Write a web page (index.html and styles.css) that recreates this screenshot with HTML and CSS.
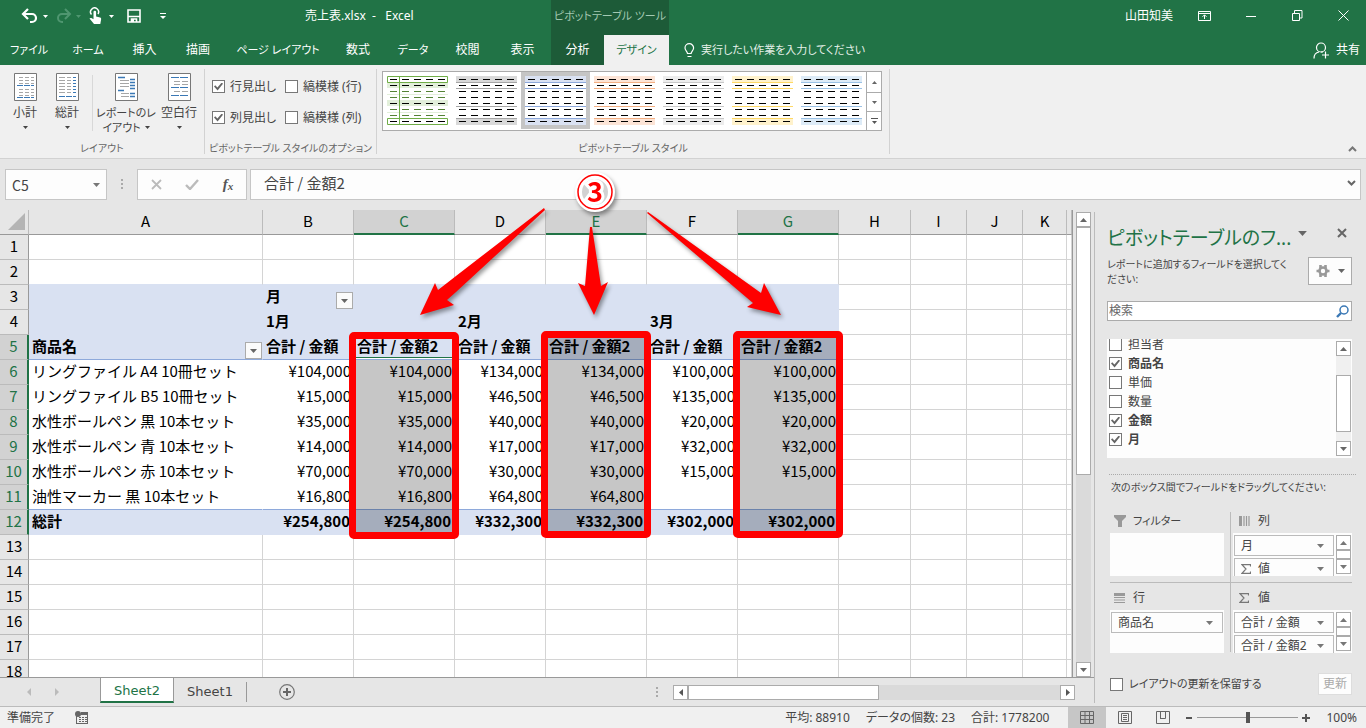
FILE: index.html
```html
<!DOCTYPE html>
<html lang="ja">
<head>
<meta charset="utf-8">
<title>売上表.xlsx - Excel</title>
<link rel="stylesheet" href="styles.css">
</head>
<body>
<svg class="defs" aria-hidden="true">
  <symbol id="down" viewBox="0 0 7 4"><path d="M0 0h7L3.500 4z" fill="currentColor"/></symbol>
  <symbol id="up" viewBox="0 0 7 4"><path d="M0 4h7L3.500 0z" fill="currentColor"/></symbol>
  <symbol id="sigma" viewBox="0 0 10 10"><path d="M9.500 2.500V.7H1L5 5 1 9.300h8.500V7.500" fill="none" stroke="currentColor" stroke-width="1.200"/></symbol>
  <symbol id="dashes" viewBox="0 0 61 49"><path d="M3 3.500h58M3 9.500h58M3 15.500h58M3 21.500h58M3 27.500h58M3 33.500h58M3 39.500h58M3 45.500h58" stroke="#000" stroke-dasharray="7 5"/></symbol>
  <symbol id="banded" viewBox="0 0 61 49"><path d="M0 0h61v6H0zM0 43h61v6H0z" fill="var(--band)"/><path d="M0 6.500h61M0 12.500h61M0 30.500h61M0 42.500h61" stroke="var(--rule)"/><use href="#dashes" width="61" height="49"/></symbol>
</svg>

<header class="app-head">
  <div class="title-row">
    <div class="title-left">
      <div class="qat">
        <span class="qat-pair"><button aria-label="元に戻す"><svg width="18" height="16"><path d="M2 6h9a4 4 0 0 1 0 8H9M7 1L2 6l5 5" fill="none" stroke="#fff" stroke-width="2.200"/></svg></button><button class="arr" aria-label="履歴"><svg width="5" height="3"><use href="#down" width="5" height="3"/></svg></button></span>
        <span class="qat-pair dim"><button aria-label="やり直し"><svg width="18" height="16"><path d="M16 6H8a4 4 0 0 0 0 8h1M11 1l5 5-5 5" fill="none" stroke="currentColor" stroke-width="2"/></svg></button><button class="arr" aria-label="やり直し履歴"><svg width="5" height="3"><use href="#down" width="5" height="3"/></svg></button></span>
        <span class="qat-pair"><button aria-label="タッチ/マウス"><svg width="18" height="18"><path d="M4.500 7.500A4 4 0 1 1 11 7" fill="none" stroke="#fff" stroke-width="1.500"/><path d="M6.500 5a1.300 1.300 0 0 1 2.600 0v4.500l4 1c1 .2 1.200 1 1 2L13.300 17H7L2.500 11.500c.8-1 2-.7 4 .8z" fill="#fff"/></svg></button><button class="arr" aria-label="モード"><svg width="5" height="3"><use href="#down" width="5" height="3"/></svg></button></span>
        <button class="save" aria-label="保存"><svg width="14" height="14"><path d="M1 1h12v12H1zM1 7.500h12M4.500 13v-3h5v3" fill="none" stroke="#fff" stroke-width="1.600"/><path d="M5 10h2v3H5z" fill="#fff"/></svg></button>
        <button class="custom" aria-label="カスタマイズ"><svg width="6" height="7"><path d="M0 .5h6" stroke="#fff"/><path d="M0 3h6L3 6z" fill="#fff"/></svg></button>
      </div>
      <h1 class="doc-title">売上表.xlsx&nbsp; -&nbsp;&nbsp; Excel</h1>
    </div>
    <div class="context-title">ピボットテーブル ツール</div>
    <div class="window-tools">
      <span class="user">山田知美</span>
      <button aria-label="リボンの表示"><svg width="14" height="12"><path d="M.5 1.500h12v9H.5zM.5 3.500h12M6.500 9V5M4.500 6.800l2-2 2 2" fill="none" stroke="#fff"/></svg></button>
      <button aria-label="最小化"><svg width="10" height="10"><path d="M0 5.500h10" stroke="#fff"/></svg></button>
      <button aria-label="元のサイズ"><svg width="11" height="11"><path d="M.5 3.500h7v7h-7zM2.500 3V.5h7.500V8H8" fill="none" stroke="#fff"/></svg></button>
      <button aria-label="閉じる"><svg width="11" height="11"><path d="M.5.5l10 10M10.500.5l-10 10" stroke="#fff"/></svg></button>
    </div>
  </div>
  <div class="tab-row">
    <nav class="tabs">
      <button class="kana">ファイル</button><button class="kana">ホーム</button><button>挿入</button><button>描画</button><button class="kana">ページ レイアウト</button><button>数式</button><button class="kana">データ</button><button>校閲</button><button>表示</button><button class="context">分析</button><button class="active kana">デザイン</button>
    </nav>
    <button class="tell kana"><svg width="11" height="15"><path d="M3.500 10.500c0-2-2.500-3-2.500-5.500a4.300 4.300 0 0 1 8.600 0c0 2.500-2.500 3.500-2.500 5.500zM3.500 13.500h4" fill="none" stroke="#fff" stroke-width="1.200"/></svg>実行したい作業を入力してください</button>
    <button class="share"><svg width="16" height="17"><circle cx="8" cy="5.500" r="4.500" fill="none" stroke="#fff" stroke-width="1.200"/><path d="M1 16.500c0-3.500 2-6 5-6.500M8 10h2M12.500 9.500v7M9 13h7" fill="none" stroke="#fff" stroke-width="1.200"/></svg>共有</button>
  </div>
</header>

<section class="ribbon">
  <div class="group layout-group">
    <div class="group-body">
      <button class="big"><svg width="23" height="28"><path d="M.5.500h22v27H.5z" fill="#fff" stroke="#777"/><path d="M5 4.500h15M5 7.500h15M5 10.500h15M5 16.500h15M5 19.500h15M5 22.500h15" stroke="#a6a6a6" stroke-dasharray="4 2"/><path d="M3 12.500h17M3 24.500h17" stroke="#3a78b5" stroke-dasharray="6 1"/></svg>小計<i><svg width="5" height="3"><use href="#down" width="5" height="3"/></svg></i></button>
      <button class="big"><svg width="23" height="28"><path d="M.5.500h22v27H.5z" fill="#fff" stroke="#777"/><path d="M3 4.500h12M3 7.500h12M3 10.500h12M3 13.500h12M3 16.500h12M3 19.500h12" stroke="#a6a6a6" stroke-dasharray="6 2"/><path d="M17 4.500h3M17 7.500h3M17 10.500h3M17 13.500h3M17 16.500h3M17 19.500h3M3 23.500h17" stroke="#3a78b5" stroke-dasharray="6 1"/></svg>総計<i><svg width="5" height="3"><use href="#down" width="5" height="3"/></svg></i></button>
      <span class="mini-rule"></span>
      <button class="big wide kana"><svg width="23" height="28"><path d="M.5.500h22v27H.5z" fill="#fff" stroke="#777"/><path d="M5 7.500h9M5 10.500h9M5 13.500h9M6 20.500h8M6 23.500h8" stroke="#a6a6a6"/><path d="M3 4.500h7M3 17.500h6M15 6.500h5M15 9.500h5M15 12.500h5M15 15.500h5M15 20.500h5M15 23.500h5" stroke="#3a78b5" stroke-width="1.400"/></svg><span>レポートのレ</span><span>イアウト <svg width="5" height="3"><use href="#down" width="5" height="3"/></svg></span></button>
      <button class="big"><svg width="23" height="28"><path d="M.5.500h22v27H.5z" fill="#fff" stroke="#777"/><path d="M6 8.500h14M6 11.500h14M6 18.500h14" stroke="#a6a6a6" stroke-dasharray="6 2"/><path d="M3 4.500h17M3 14.500h17M3 22.500h17" stroke="#3a78b5" stroke-dasharray="8 1"/></svg>空白行<i><svg width="5" height="3"><use href="#down" width="5" height="3"/></svg></i></button>
    </div>
    <div class="group-name">レイアウト</div>
  </div>
  <div class="group option-group">
    <div class="group-body options">
      <label><input type="checkbox" checked>行見出し</label><label><input type="checkbox">縞模様 (行)</label>
      <label><input type="checkbox" checked>列見出し</label><label><input type="checkbox">縞模様 (列)</label>
    </div>
    <div class="group-name">ピボットテーブル スタイルのオプション</div>
  </div>
  <div class="group style-group">
    <div class="group-body">
      <div class="gallery">
        <button aria-label="スタイル 緑"><svg width="61" height="49"><path d="M0 6h61v6H0zM0 24h61v6H0z" fill="#e2efda"/><path d="M0 18.500h61M0 36.500h61" stroke="#e2efda"/><path d="M.5.500h60v6H.5zM.5 42.500h60v6H.5zM12.500 0v49" fill="none" stroke="#70ad47"/><path d="M3 3.500h58M3 9.500h58M3 27.500h58M3 45.500h58" stroke="#000" stroke-dasharray="7 5"/><path d="M3 15.500h58M3 21.500h58M3 33.500h58M3 39.500h58" stroke="#548235" stroke-dasharray="7 5"/></svg></button>
        <button class="gray" aria-label="スタイル 灰"><svg width="61" height="49"><use href="#banded" width="61" height="49"/></svg></button>
        <button class="blue chosen" aria-label="スタイル 青"><svg width="61" height="49"><use href="#banded" width="61" height="49"/></svg></button>
        <button class="orange" aria-label="スタイル オレンジ"><svg width="61" height="49"><use href="#banded" width="61" height="49"/></svg></button>
        <button class="silver" aria-label="スタイル 銀"><svg width="61" height="49"><use href="#banded" width="61" height="49"/></svg></button>
        <button class="yellow" aria-label="スタイル 黄"><svg width="61" height="49"><use href="#banded" width="61" height="49"/></svg></button>
        <button class="sky" aria-label="スタイル 水色"><svg width="61" height="49"><use href="#banded" width="61" height="49"/></svg></button>
        <div class="gallery-nav">
          <button aria-label="上へ"><svg width="5" height="3"><use href="#up" width="5" height="3"/></svg></button>
          <button aria-label="下へ"><svg width="5" height="3"><use href="#down" width="5" height="3"/></svg></button>
          <button aria-label="その他"><svg width="7" height="6"><path d="M0 .5h7" stroke="#555"/><path d="M1 3h5L3.500 6z" fill="#555"/></svg></button>
        </div>
      </div>
    </div>
    <div class="group-name">ピボットテーブル スタイル</div>
  </div>
  <button class="collapse" aria-label="リボンを折りたたむ"><svg width="9" height="6"><path d="M1 5l3.500-3.500L8 5" fill="none" stroke="#777" stroke-width="2"/></svg></button>
</section>

<section class="formula-bar">
  <div class="name-box"><input value="C5" aria-label="名前ボックス"><button aria-label="名前一覧"><svg width="7" height="4"><use href="#down" width="7" height="4"/></svg></button></div>
  <span class="grip"></span>
  <div class="fx-box">
    <button aria-label="キャンセル"><svg width="11" height="11"><path d="M1 1l9 9M10 1L1 10" stroke="#bbb" stroke-width="1.800"/></svg></button>
    <button aria-label="入力"><svg width="14" height="11"><path d="M1 6l4 4 8-9" fill="none" stroke="#bbb" stroke-width="2.400"/></svg></button>
    <button class="fx" aria-label="関数の挿入">f<small>x</small></button>
  </div>
  <div class="formula"><input value="合計 / 金額2" aria-label="数式バー"><button aria-label="展開"><svg width="9" height="6"><path d="M1 1l3.500 3.500L8 1" fill="none" stroke="#666" stroke-width="2"/></svg></button></div>
</section>

<main class="work">
  <div class="book">
    <div class="sheet-area">
      <div class="sheet">
        <table>
          <colgroup><col class="c-head"><col class="c-a"><col class="c-91"><col class="c-101"><col class="c-91"><col class="c-101"><col class="c-91"><col class="c-101"><col class="c-h"><col class="c-i"><col class="c-i"><col class="c-k"><col></colgroup>
          <thead><tr><th class="corner"><svg width="17" height="17"><path d="M17 0v17H0z" fill="#b4b4b4"/></svg></th><th>A</th><th>B</th><th class="on">C</th><th>D</th><th class="on">E</th><th>F</th><th class="on">G</th><th>H</th><th>I</th><th>J</th><th>K</th><th></th></tr></thead>
          <tbody>
            <tr><th>1</th><td></td><td></td><td></td><td></td><td></td><td></td><td></td><td></td><td></td><td></td><td></td><td></td></tr>
            <tr class="above"><th>2</th><td></td><td></td><td></td><td></td><td></td><td></td><td></td><td></td><td></td><td></td><td></td><td></td></tr>
            <tr class="pv head"><th>3</th><td></td><td class="has-filter"><div class="filter">月<button aria-label="列の絞り込み"><svg width="7" height="4"><use href="#down" width="7" height="4"/></svg></button></div></td><td></td><td></td><td></td><td></td><td></td><td></td><td></td><td></td><td></td><td></td></tr>
            <tr class="pv head"><th>4</th><td></td><td>1月</td><td></td><td>2月</td><td></td><td>3月</td><td></td><td></td><td></td><td></td><td></td><td></td></tr>
            <tr class="pv head ruled"><th class="on">5</th><td class="has-filter"><div class="filter">商品名<button aria-label="行の絞り込み"><svg width="7" height="4"><use href="#down" width="7" height="4"/></svg></button></div></td><td>合計 / 金額</td><td class="current">合計 / 金額2</td><td>合計 / 金額</td><td class="sel">合計 / 金額2</td><td>合計 / 金額</td><td class="sel">合計 / 金額2</td><td></td><td></td><td></td><td></td><td></td></tr>
            <tr class="pv data"><th class="on">6</th><td>リングファイル A4 10冊セット</td><td>¥104,000</td><td class="sel">¥104,000</td><td>¥134,000</td><td class="sel">¥134,000</td><td>¥100,000</td><td class="sel">¥100,000</td><td></td><td></td><td></td><td></td><td></td></tr>
            <tr class="pv data"><th class="on">7</th><td>リングファイル B5 10冊セット</td><td>¥15,000</td><td class="sel">¥15,000</td><td>¥46,500</td><td class="sel">¥46,500</td><td>¥135,000</td><td class="sel">¥135,000</td><td></td><td></td><td></td><td></td><td></td></tr>
            <tr class="pv data"><th class="on">8</th><td>水性ボールペン 黒 10本セット</td><td>¥35,000</td><td class="sel">¥35,000</td><td>¥40,000</td><td class="sel">¥40,000</td><td>¥20,000</td><td class="sel">¥20,000</td><td></td><td></td><td></td><td></td><td></td></tr>
            <tr class="pv data"><th class="on">9</th><td>水性ボールペン 青 10本セット</td><td>¥14,000</td><td class="sel">¥14,000</td><td>¥17,000</td><td class="sel">¥17,000</td><td>¥32,000</td><td class="sel">¥32,000</td><td></td><td></td><td></td><td></td><td></td></tr>
            <tr class="pv data"><th class="on">10</th><td>水性ボールペン 赤 10本セット</td><td>¥70,000</td><td class="sel">¥70,000</td><td>¥30,000</td><td class="sel">¥30,000</td><td>¥15,000</td><td class="sel">¥15,000</td><td></td><td></td><td></td><td></td><td></td></tr>
            <tr class="pv data ruled"><th class="on">11</th><td>油性マーカー 黒 10本セット</td><td>¥16,800</td><td class="sel">¥16,800</td><td>¥64,800</td><td class="sel">¥64,800</td><td></td><td class="sel"></td><td></td><td></td><td></td><td></td><td></td></tr>
            <tr class="pv head total"><th class="on">12</th><td>総計</td><td>¥254,800</td><td class="sel">¥254,800</td><td>¥332,300</td><td class="sel">¥332,300</td><td>¥302,000</td><td class="sel">¥302,000</td><td></td><td></td><td></td><td></td><td></td></tr>
            <tr><th>13</th><td></td><td></td><td></td><td></td><td></td><td></td><td></td><td></td><td></td><td></td><td></td><td></td></tr>
            <tr><th>14</th><td></td><td></td><td></td><td></td><td></td><td></td><td></td><td></td><td></td><td></td><td></td><td></td></tr>
            <tr><th>15</th><td></td><td></td><td></td><td></td><td></td><td></td><td></td><td></td><td></td><td></td><td></td><td></td></tr>
            <tr><th>16</th><td></td><td></td><td></td><td></td><td></td><td></td><td></td><td></td><td></td><td></td><td></td><td></td></tr>
            <tr><th>17</th><td></td><td></td><td></td><td></td><td></td><td></td><td></td><td></td><td></td><td></td><td></td><td></td></tr>
            <tr><th>18</th><td></td><td></td><td></td><td></td><td></td><td></td><td></td><td></td><td></td><td></td><td></td><td></td></tr>
          </tbody>
        </table>
      </div>
      <div class="vscroll tall"><button aria-label="上へ"><svg width="7" height="4"><use href="#up" width="7" height="4"/></svg></button><span class="thumb"></span><button aria-label="下へ"><svg width="7" height="4"><use href="#down" width="7" height="4"/></svg></button></div>
    </div>
    <div class="sheet-tabs">
      <div class="tab-nav"><button aria-label="前のシート"><svg width="4" height="8"><path d="M4 0v8L0 4z" fill="#bbb"/></svg></button><button aria-label="次のシート"><svg width="4" height="8"><path d="M0 0v8l4-4z" fill="#bbb"/></svg></button></div>
      <button class="sheet-tab active">Sheet2</button><button class="sheet-tab">Sheet1</button>
      <button class="add" aria-label="新しいシート"><svg width="16" height="16"><circle cx="8" cy="8" r="7.300" fill="none" stroke="#777" stroke-width="1.200"/><path d="M4 8h8M8 4v8" stroke="#666" stroke-width="2"/></svg></button>
      <span class="grip tab-grip"></span>
      <div class="hscroll"><button aria-label="左へ"><svg width="4" height="7"><path d="M4 0v7L0 3.500z" fill="#555"/></svg></button><span class="thumb"></span><button aria-label="右へ"><svg width="4" height="7"><path d="M0 0v7l4-3.500z" fill="#555"/></svg></button></div>
    </div>

    <div class="marks">
      <span class="frame frame-c"></span><span class="frame frame-e"></span><span class="frame frame-g"></span>
      <svg class="arrows" width="450" height="160" viewBox="400 165 450 160">
        <g class="arrow-set" fill="#f00">
          <path d="M544 208L456 276 438 290 435 283 420 315 454 305 447 300 456 292 545 210z"/>
          <path d="M590 227L585 286 578 283 594 315 608 282 601 286 592 227z"/>
          <path d="M648 212L761 293 764 283 781 315 747 307 753 303 647 213z"/>
        </g>
        <g class="arrow-set">
          <circle cx="595" cy="192" r="15" fill="#d2d2d2"/>
          <circle cx="595" cy="192" r="16.500" fill="none" stroke="#fff" stroke-width="7"/>
          <circle cx="595" cy="192" r="17" fill="none" stroke="#f00" stroke-width="1.500"/>
          <text class="step" x="595" y="202" text-anchor="middle">3</text>
        </g>
      </svg>
    </div>
  </div>

  <aside class="pane">
    <div class="pane-head"><h2>ピボットテーブルのフ...</h2><button aria-label="作業ウィンドウ オプション"><svg width="9" height="5"><use href="#down" width="9" height="5"/></svg></button><button class="close" aria-label="閉じる"><svg width="10" height="10"><path d="M1 1l8 8M9 1L1 9" stroke="#666" stroke-width="2"/></svg></button></div>
    <div class="pane-desc"><p>レポートに追加するフィールドを選択してく<br>ださい:</p><button class="gear" aria-label="ツール"><svg width="14" height="14" viewBox="0 0 14 14"><circle cx="7" cy="7" r="3.500" fill="none" stroke="#999" stroke-width="2.600"/><path d="M4.500 1v3M9.500 1v3M4.500 10v3M9.500 10v3M.5 7h3M10.500 7h3" stroke="#999" stroke-width="2.600"/></svg><svg width="7" height="4"><use href="#down" width="7" height="4"/></svg></button></div>
    <div class="search"><input placeholder="検索" aria-label="検索"><svg width="13" height="13"><circle cx="8" cy="5" r="4" fill="none" stroke="#3a78b5" stroke-width="1.500"/><path d="M5 8L1 12" stroke="#3a78b5" stroke-width="2.400"/></svg></div>
    <div class="fields">
      <div class="field-list">
        <label><input type="checkbox">担当者</label>
        <label class="used"><input type="checkbox" checked>商品名</label>
        <label><input type="checkbox">単価</label>
        <label><input type="checkbox">数量</label>
        <label class="used"><input type="checkbox" checked>金額</label>
        <label class="used"><input type="checkbox" checked>月</label>
      </div>
      <div class="vscroll list-scroll"><button aria-label="上へ"><svg width="7" height="4"><use href="#up" width="7" height="4"/></svg></button><span class="thumb"></span><button aria-label="下へ"><svg width="7" height="4"><use href="#down" width="7" height="4"/></svg></button></div>
    </div>
    <p class="drag-note">次のボックス間でフィールドをドラッグしてください:</p>
    <div class="zones">
      <section class="zone"><h3 class="kana"><svg width="12" height="12"><path d="M0 0h12v2L8 6v6H4V6L0 2z" fill="#999"/></svg>フィルター</h3><div class="drop"></div></section>
      <section class="zone right"><h3><svg width="12" height="10"><path d="M0 0h3v10H0z" fill="#999"/><path d="M5 0v10M7.500 0v10M10 0v10" stroke="#999" stroke-width="1.200"/></svg>列</h3><div class="drop"><div class="pills"><button>月<svg width="7" height="4"><use href="#down" width="7" height="4"/></svg></button><button><span><svg width="10" height="10"><use href="#sigma" width="10" height="10"/></svg> 値</span><svg width="7" height="4"><use href="#down" width="7" height="4"/></svg></button></div><div class="vscroll"><button aria-label="上へ"><svg width="7" height="4"><use href="#up" width="7" height="4"/></svg></button><span class="thumb"></span><button aria-label="下へ"><svg width="7" height="4"><use href="#down" width="7" height="4"/></svg></button></div></div></section>
      <section class="zone lower"><h3><svg width="12" height="10"><path d="M0 0h11v3H0z" fill="#999"/><path d="M0 4.500h11M0 7h11M0 9.500h11" stroke="#999"/></svg>行</h3><div class="drop"><div class="pills"><button>商品名<svg width="7" height="4"><use href="#down" width="7" height="4"/></svg></button></div></div></section>
      <section class="zone right lower"><h3><svg width="12" height="10"><use href="#sigma" width="10" height="10"/></svg>値</h3><div class="drop"><div class="pills"><button>合計 / 金額<svg width="7" height="4"><use href="#down" width="7" height="4"/></svg></button><button>合計 / 金額2<svg width="7" height="4"><use href="#down" width="7" height="4"/></svg></button></div><div class="vscroll"><button aria-label="上へ"><svg width="7" height="4"><use href="#up" width="7" height="4"/></svg></button><span class="thumb"></span><button aria-label="下へ"><svg width="7" height="4"><use href="#down" width="7" height="4"/></svg></button></div></div></section>
    </div>
    <div class="defer"><label class="kana"><input type="checkbox">レイアウトの更新を保留する</label><button disabled>更新</button></div>
  </aside>
</main>

<footer class="status">
  <span>準備完了</span>
  <svg class="macro" width="14" height="13"><path d="M1.500 5v7.500h11V1M1 12.500h12" fill="none" stroke="#666"/><path d="M6 1h7v3H6zM4 6h2v1H4zM7 6h2v1H7zM10 6h2v1h-2zM4 8h2v1H4zM7 8h2v1H7zM10 8h2v1h-2zM4 10h2v1H4zM7 10h2v1H7zM10 10h2v1h-2z" fill="#666"/><circle cx="3" cy="3" r="3" fill="#666"/></svg>
  <div class="sums"><span>平均: 88910</span><span>データの個数: 23</span><span>合計: 1778200</span></div>
  <div class="views">
    <button class="active" aria-label="標準"><svg width="14" height="13"><path d="M.5.500h13v12H.5zM5 0v13M9.500 0v13M0 4.500h14M0 8.500h14" fill="none" stroke="#666"/></svg></button>
    <button aria-label="ページ レイアウト"><svg width="14" height="13"><path d="M.5.500h13v12H.5zM3.500 2.500h7v8h-7zM5 4.500h4M5 6.500h4M5 8.500h4" fill="none" stroke="#666"/></svg></button>
    <button aria-label="改ページ プレビュー"><svg width="14" height="13"><path d="M.5.500h13v12H.5zM4.500 0v7.500h5V0M9 7.500H4" fill="none" stroke="#666"/></svg></button>
  </div>
  <div class="zoom"><button aria-label="縮小"><svg width="8" height="8"><path d="M1 4h6" stroke="#555" stroke-width="2"/></svg></button><input type="range" min="0" max="100" value="50" aria-label="ズーム"><button aria-label="拡大"><svg width="8" height="8"><path d="M0 4h8M4 0v8" stroke="#555" stroke-width="2"/></svg></button><span>100%</span></div>
</footer>
</body>
</html>
```
FILE: styles.css
```css
* { box-sizing: border-box; }
body {
  margin: 0; height: 100vh; display: flex; flex-direction: column; overflow: hidden;
  font: 12px/16px "Noto Sans", "Noto Sans CJK JP", sans-serif;
  font-feature-settings: "palt";
  color: #444; background: #e6e6e6;
}
button, input { font: inherit; font-feature-settings: inherit; color: inherit; margin: 0; padding: 0; border: 0; background: none; }
button { display: flex; align-items: center; justify-content: center; white-space: nowrap; }
h1, h2, h3, p { margin: 0; font-size: inherit; font-weight: normal; }
svg { display: block; flex: none; }
.defs { position: absolute; width: 0; height: 0; }
.kana { font-size: 11px; }

/* Title bar and ribbon tabs */
.app-head { background: #217346; color: #fff; flex: none; }
.title-row { display: flex; height: 35px; }
.title-left { width: 551px; display: flex; align-items: center; padding: 0 0 3px 21px; }
.qat { display: flex; align-items: center; gap: 3px; width: 284px; }
.qat-pair { display: flex; align-items: center; }
.qat-pair button { width: 18px; }
.qat-pair .arr { width: 12px; }
.dim { color: #4f9670; }
.qat .save { width: 28px; }
.qat .custom { width: 24px; }
.context-title { width: 118px; background: #1d5b38; color: #a3c9b2; text-align: center; font-size: 11px; line-height: 32px; white-space: nowrap; }
.window-tools { flex: 1; display: flex; justify-content: flex-end; align-items: center; padding-bottom: 4px; }
.window-tools button { width: 46px; height: 30px; }
.user { margin-right: 9px; }
.tab-row { display: flex; height: 30px; }
.tabs { display: grid; grid-template-columns: 58px 60px 53px 54px 106px 54px 56px 53px 57px 53px 65px; }
.tabs .context { background: #1d5b38; }
.tabs .active { background: #f0f0f0; color: #217346; }
.tell { gap: 6px; margin-left: 15px; color: #e4f0e8; }
.share { gap: 7px; margin-left: auto; margin-right: 6px; }

/* Ribbon */
.ribbon { flex: none; height: 94px; display: flex; background: #f0f0f0; border-bottom: 1px solid #d2d2d2; padding: 4px 0; }
.group { display: flex; flex-direction: column; border-right: 1px solid #d2d2d2; }
.group-body { flex: 1; display: flex; }
.group-name { color: #666; font-size: 10px; height: 12px; white-space: nowrap; display: flex; align-items: center; justify-content: center; }
.layout-group { width: 205px; }
.layout-group .group-body { padding: 4px 0 0 4px; align-items: flex-start; }
.big { flex-direction: column; justify-content: flex-start; width: 42px; line-height: 16px; }
.big > svg { margin-bottom: 4px; }
.big i { height: 12px; display: flex; align-items: center; }
.big span { display: flex; gap: 4px; align-items: center; }
.big.wide { width: 64px; }
.big.wide span { line-height: 15px; }
.mini-rule { width: 1px; height: 56px; background: #d8d8d8; margin: 2px 1px 0 4px; }
.option-group { width: 172px; }
.options { display: grid; grid-template-columns: 73px 1fr; grid-template-rows: 31px 31px; padding: 2px 0 0 7px; }
.options label { display: flex; align-items: center; gap: 5px; white-space: nowrap; }
input[type=checkbox] { appearance: none; width: 13px; height: 13px; border: 1px solid #777; background: #fff; flex: none; display: grid; place-items: center; }
input[type=checkbox]:checked::before { content: ""; width: 9px; height: 8px; background: #666; clip-path: polygon(0 50%, 14% 34%, 38% 62%, 86% 0, 100% 16%, 40% 100%); }
.style-group { width: 513px; }
.style-group .group-body { padding: 2px 7px 8px 5px; }
.gallery { display: flex; width: 500px; height: 60px; background: #fff; border: 1px solid #ababab; }
.gallery > button { width: 69px; height: 57px; border: 4px solid transparent; }
.gallery > .chosen { border-color: #c5c5c5; }
.gray { --band: #d9d9d9; --rule: #a6a6a6; }
.blue { --band: #d9e1f2; --rule: #8ea9db; }
.orange { --band: #fce4d6; --rule: #f4b084; }
.silver { --band: #ededed; --rule: #c9c9c9; }
.yellow { --band: #fff2cc; --rule: #ffd966; }
.sky { --band: #ddebf7; --rule: #9bc2e6; }
.gallery-nav { flex: 1; display: grid; grid-template-rows: 20px 19px 19px; border-left: 1px solid #ababab; color: #666; }
.gallery-nav button + button { border-top: 1px solid #ababab; }
.collapse { margin-left: auto; align-self: flex-end; width: 28px; height: 10px; }

/* Formula bar */
.formula-bar { flex: none; height: 51px; display: flex; align-items: center; padding: 0 5px 1px; }
.name-box, .fx-box, .formula { height: 31px; display: flex; background: #fdfdfd; border: 1px solid #c6c6c6; }
.name-box { width: 102px; padding: 2px 0 0 6px; font-size: 14px; font-family: "Noto Sans CJK JP", sans-serif; }
.name-box input { flex: 1; min-width: 0; }
.name-box button { width: 20px; color: #777; }
.grip { width: 2px; height: 10px; background: repeating-linear-gradient(#aaa 0 2px, transparent 2px 4px); margin: 0 14px; }
.fx-box { width: 110px; }
.fx-box button { flex: 1; }
.fx-box .fx { font: italic bold 15px/16px "Liberation Serif", serif; color: #555; }
.fx small { font-size: 11px; padding-top: 3px; }
.formula { flex: 1; margin-left: 3px; padding: 0 0 2px 13px; font: 15px/18px "Noto Sans CJK JP", sans-serif; font-feature-settings: normal; }
.formula input { flex: 1; min-width: 0; }
.formula button { width: 17px; }

/* Workbook */
.work { flex: 1; min-height: 0; display: flex; }
.book { flex: 1; min-width: 0; display: flex; flex-direction: column; position: relative; }
.sheet-area { flex: 1; min-height: 0; display: flex; border-bottom: 1px solid #999; padding-right: 3px; }
.sheet { flex: 1; min-width: 0; overflow: hidden; border-right: 1px solid #999; margin-right: 3px; }
.sheet table { width: 100%; table-layout: fixed; border-collapse: separate; border-spacing: 0; background: #fff; color: #000; font: 15px/20px "Noto Sans CJK JP", sans-serif; font-feature-settings: normal; }
.c-head { width: 29px; }
.c-a { width: 234px; }
.c-91 { width: 91px; }
.c-101 { width: 101px; }
.c-h { width: 72px; }
.c-i { width: 56px; }
.c-k { width: 44px; }
.sheet tr { height: 25px; }
.sheet th, .sheet td { padding: 0 0 2px; height: 25px; white-space: nowrap; }
.sheet th { font-weight: normal; background: #e6e6e6; border-right: 1px solid #bbb; border-bottom: 1px solid #999; }
.sheet tbody th { border-right-color: #999; border-bottom-color: #bbb; }
.sheet th.on { background: #d2d2d2; color: #217346; }
.sheet thead th.on { border-bottom: 2px solid #217346; }
.sheet tbody th.on { border-right: 2px solid #217346; }
.corner svg { margin-left: 8px; }
.sheet td { border-right: 1px solid #d4d4d4; border-bottom: 1px solid #d4d4d4; }
.sheet .pv td:nth-child(-n+8) { border-color: transparent; padding-left: 3px; }
.sheet .above td:nth-child(-n+8) { border-bottom-color: #d9e1f2; }
.sheet .head td:nth-child(-n+8) { background: #d9e1f2; font-weight: bold; }
.sheet .data td:nth-child(n+3), .sheet .total td:nth-child(n+3) { text-align: right; padding-right: 2px; }
.sheet .total td:nth-child(n+3) { padding-right: 3px; }
.sheet .ruled td:nth-child(-n+8) { border-bottom-color: #8ea9db; }
.sheet .data td.sel:nth-child(-n+8) { background: #c6c6c6; }
.sheet .head td.sel:nth-child(-n+8) { background: #a5adbc; }
.sheet .ruled td.sel:nth-child(-n+8) { border-bottom-color: #6b82ab; }
.sheet .current { box-shadow: inset 0 -1px #fff, inset 0 -2px #217346; }
.sheet .has-filter { padding-bottom: 0; }
.filter { display: flex; justify-content: space-between; height: 24px; line-height: 22px; }
.filter button { width: 17px; height: 17px; align-self: flex-end; background: #fbfbfb; border: 1px solid #ababab; color: #666; }

/* Scroll bars */
.vscroll { width: 15px; display: flex; flex-direction: column; flex: none; background: #dadada; color: #666; }
.vscroll button { height: 15px; background: #fff; border: 1px solid #ababab; flex: none; }
.thumb { background: #fff; border: 1px solid #ababab; }
.vscroll button:last-child { margin-top: auto; }
.tall { margin-top: 2px; }
.tall .thumb { height: 248px; }
.hscroll { display: flex; width: 402px; height: 15px; background: #dadada; }
.hscroll button { width: 15px; background: #fff; border: 1px solid #ababab; }
.hscroll .thumb { width: 191px; }
.hscroll button:last-child { margin-left: auto; }

/* Sheet tabs */
.sheet-tabs { flex: none; height: 28px; display: flex; align-items: center; padding-right: 19px; font: 13px/16px "DejaVu Sans", sans-serif; }
.tab-nav { width: 100px; display: flex; gap: 24px; padding-left: 27px; }
.sheet-tab { width: 73px; height: 20px; border-right: 1px solid #999; }
.sheet-tab.active { width: 74px; height: 25px; padding-top: 3px; align-self: flex-start; background: #fff; color: #217346; border-bottom: 2px solid #217346; border-left: 1px solid #999; }
.add { margin-left: 32px; }
.tab-grip { margin: 0 15px 0 auto; }

/* Callouts */
.marks { position: absolute; inset: 0; pointer-events: none; }
.frame { position: absolute; width: 110px; height: 207px; border: 7px solid #f00; border-radius: 5px; }
.frame-c { left: 349px; top: 122px; }
.frame-e { left: 541px; top: 121px; }
.frame-g { left: 733px; top: 121px; }
.arrows { position: absolute; left: 400px; top: -45px; }
.arrow-set { filter: drop-shadow(2px 3px 2px rgba(0, 0, 0, .4)); }
.step { font: bold 27px "Noto Sans CJK JP", sans-serif; fill: #f00; stroke: #fff; stroke-width: 6px; paint-order: stroke; }

/* Field pane */
.pane { flex: none; width: 272px; border-left: 1px solid #bbb; margin: 2px 0 3px; padding: 12px 14px 0 12px; display: flex; flex-direction: column; }
.pane-head { display: flex; height: 30px; color: #666; }
.pane-head h2 { flex: 1; font-size: 19px; line-height: 28px; color: #217346; white-space: nowrap; }
.pane-head button { width: 14px; height: 18px; }
.pane-head .close { margin: 0 5px 0 28px; width: 10px; }
.pane-desc { display: flex; justify-content: space-between; height: 47px; font-size: 10px; line-height: 15px; white-space: nowrap; padding-top: 3px; }
.gear { flex: none; width: 44px; height: 28px; gap: 8px; background: #fdfdfd; border: 1px solid #ababab; color: #666; }
.search { flex: none; display: flex; align-items: center; height: 20px; background: #fff; border: 1px solid #ababab; padding: 0 2px 0 1px; }
.search input { flex: 1; min-width: 0; }
.search input::placeholder { color: #666; }
.fields { flex: none; display: flex; height: 119px; margin-top: 18px; background: #fdfdfd; padding: 0 1px 0 2px; overflow: hidden; }
.field-list { flex: 1; display: flex; flex-direction: column; justify-content: flex-end; padding-bottom: 9px; }
.field-list label { display: flex; flex: none; align-items: center; gap: 6px; height: 19px; }
.used { font-weight: bold; }
.list-scroll { margin: 2px 0; background: #f0f0f0; }
.list-scroll .thumb { height: 57px; margin-top: 19px; }
.drag-note { flex: none; border-top: 1px dotted #aaa; margin: 16px -4px 0 2px; padding: 4px 0 0 2px; height: 38px; font-size: 10px; white-space: nowrap; }
.zones { flex: none; display: grid; grid-template-columns: 120px 1fr; padding-left: 3px; color: #444; }
.zone { padding-right: 6px; height: 70px; }
.zone.right { border-left: 1px solid #bbb; padding: 0 0 0 2px; }
.zone.lower { border-top: 1px solid #bbb; padding-top: 6px; }
.zone h3 { display: flex; align-items: center; gap: 7px; height: 21px; padding: 0 4px 4px; }
.zone svg { color: #777; }
.zone.right h3 { padding-left: 6px; }
.drop { height: 43px; display: flex; gap: 2px; overflow: hidden; background: #fdfdfd; padding: 2px 1px 2px 1px; }
.pills { flex: 1; display: flex; flex-direction: column; gap: 2px; height: 44px; }
.pills button { flex: none; height: 21px; justify-content: space-between; padding: 0 9px 0 6px; border: 1px solid #bbb; }
.pills span { display: flex; gap: 7px; align-items: center; color: inherit; }
.drop .vscroll .thumb { height: 9px; }
.drop .vscroll { height: 39px; }
.defer { display: flex; align-items: center; justify-content: space-between; padding-left: 3px; margin-top: 21px; }
.defer label { display: flex; align-items: center; gap: 6px; }
.defer button { width: 34px; height: 22px; background: #fdfdfd; border: 1px solid #ddd; color: #aaa; }

/* Status bar */
.status { flex: none; height: 22px; display: flex; align-items: center; background: #f0f0f0; border-top: 1px solid #bbb; padding: 0 9px 0 7px; white-space: nowrap; }
.macro { margin-left: 20px; }
.sums { margin-left: auto; margin-right: 19px; display: flex; gap: 16px; }
.views { display: flex; align-self: stretch; }
.views button { width: 38px; }
.views .active { background: #c6c6c6; }
.zoom { display: flex; align-items: center; margin-left: 3px; }
.zoom input { appearance: none; width: 101px; height: 1px; margin: 0 4px; background: #999; }
.zoom input::-webkit-slider-thumb { appearance: none; width: 4px; height: 11px; background: #555; }
.zoom span { margin-left: 16px; }
```
